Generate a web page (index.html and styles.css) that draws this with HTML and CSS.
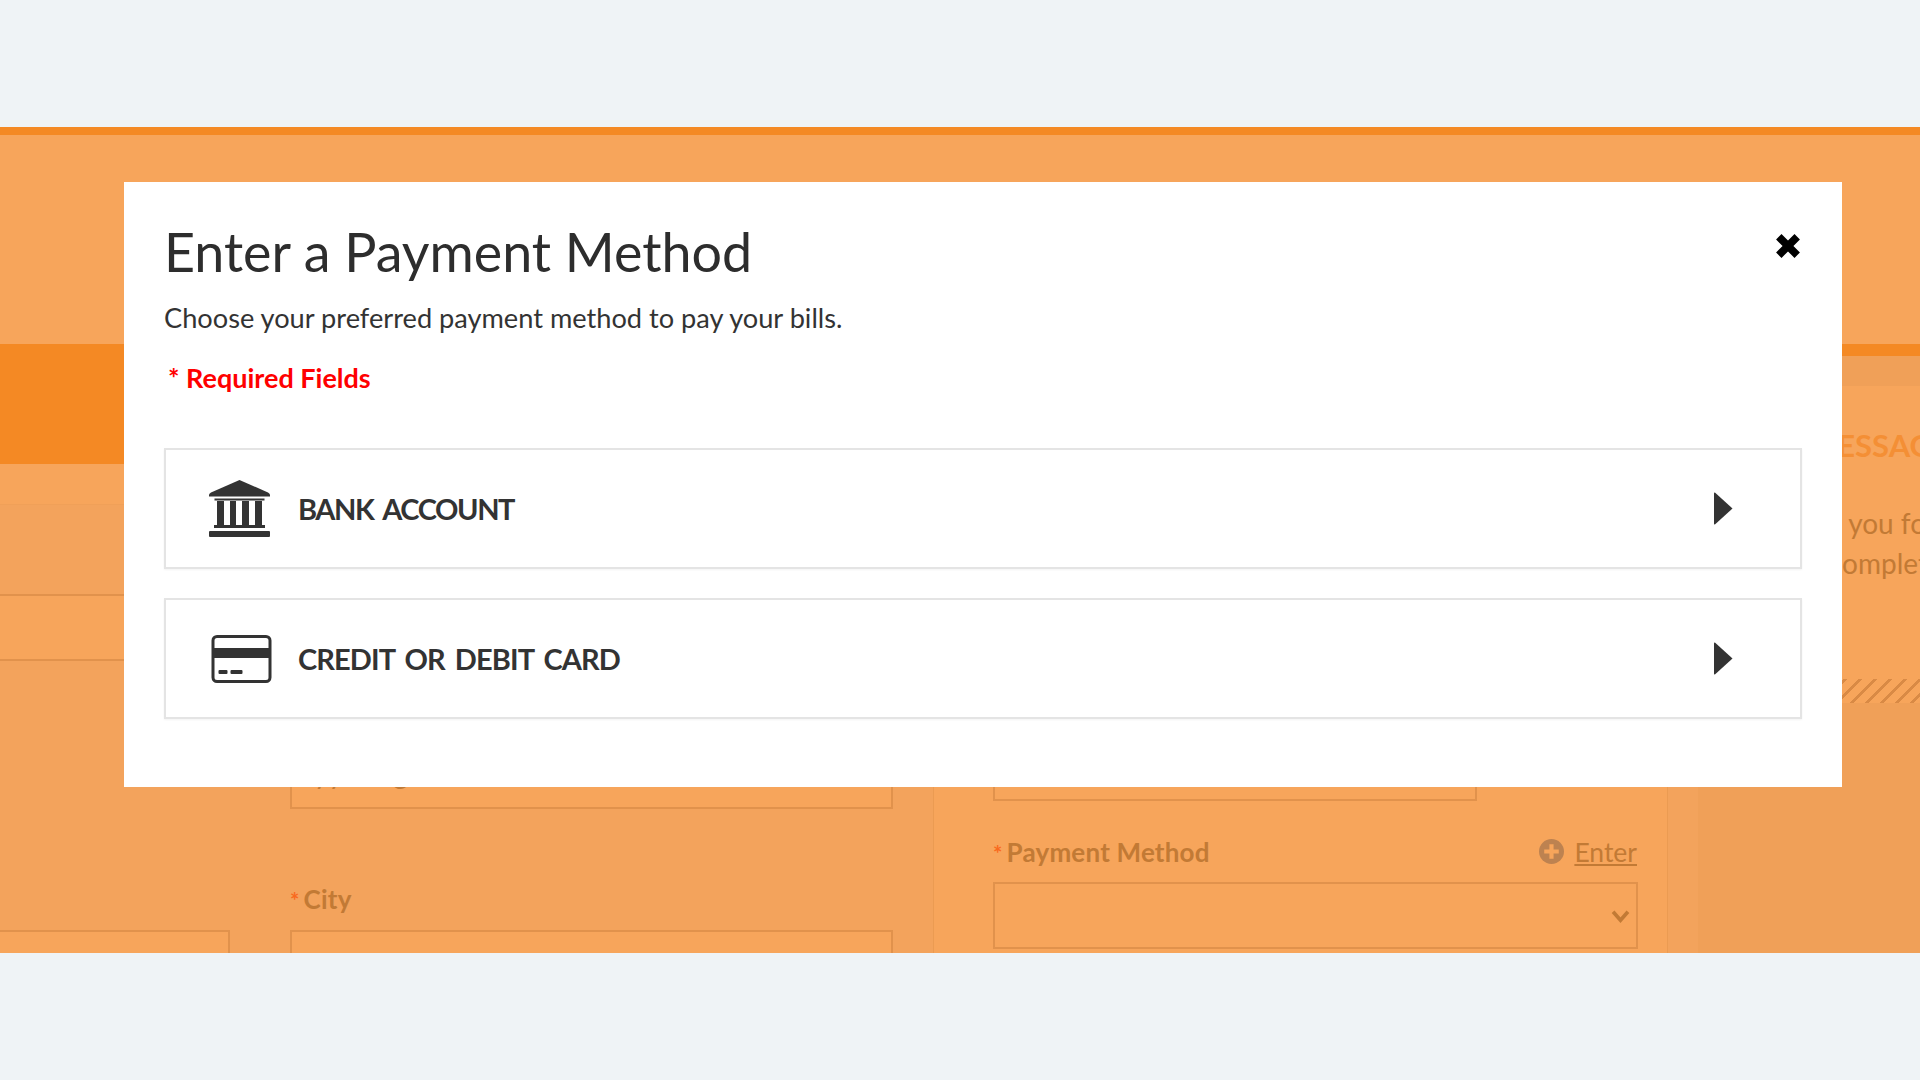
FILE: index.html
```html
<!DOCTYPE html>
<html lang="en">
<head>
  <meta charset="UTF-8" />
  <title>Enter a Payment Method</title>
  <link rel="stylesheet" href="styles.css">
</head>
<body>
  <div id="stage">
    <div class="page">
      <main class="main">
        <div class="band"></div>
        <div class="form">
          <div class="col-a">
            <div class="input input-a"></div>
            <div class="input input-a2"></div>
          </div>
          <div class="col-b">
            <div class="input input-b"><span class="input-text">yy g</span></div>
            <label class="field-label label-city"><span class="req">*</span>City</label>
            <div class="input input-b2"></div>
          </div>
          <div class="panel">
            <div class="input input-c"></div>
            <div class="label-row">
              <label class="field-label"><span class="req">*</span>Payment Method</label>
              <a class="enter-link">
                <svg class="plus-icon" viewBox="0 0 24 24"><circle cx="12" cy="12" r="12" /><path d="M10 5h4v5h5v4h-5v5h-4v-5H5v-4h5z" fill="#f7a55b" /></svg>
                <span>Enter</span>
              </a>
            </div>
            <div class="input select">
              <svg class="chevron" viewBox="0 0 20 14"><path d="M2 2l8 9 8-9" /></svg>
            </div>
          </div>
        </div>
      </main>
      <aside class="aside">
        <div class="aside-rule"></div>
        <div class="aside-head"></div>
        <h3 class="aside-title">MESSAGES</h3>
        <p class="aside-text aside-text-1">Thank you for</p>
        <p class="aside-text aside-text-2">complete your</p>
        <div class="hatch"></div>
      </aside>
    </div>

    <!-- Payment method modal -->
    <div class="modal">
      <button class="modal-close">
        <svg viewBox="0 0 24 24"><path d="M1 6l5-5 6 6 6-6 5 5-6 6 6 6-5 5-6-6-6 6-5-5 6-6z" /></svg>
      </button>
      <h1 class="modal-title">Enter a Payment Method</h1>
      <p class="modal-sub">Choose your preferred payment method to pay your bills.</p>
      <p class="modal-req">* Required Fields</p>
      <div class="method-list">
        <div class="method">
          <svg class="method-icon" viewBox="0 0 61 57">
            <path d="M30.500 0L59 12.500Q61 13.500 61 15V16.500H0V15Q0 13.500 2 12.500z" />
            <rect x="5.500" y="18.500" width="50" height="2" />
            <rect x="8" y="21" width="7" height="24" />
            <rect x="21" y="21" width="6" height="24" />
            <rect x="33" y="21" width="7" height="24" />
            <rect x="46" y="21" width="7" height="24" />
            <rect x="5" y="45" width="51" height="3" />
            <rect x="0" y="51" width="61" height="6" rx="1" />
          </svg>
          <span class="method-name method-name-bank">BANK ACCOUNT</span>
          <svg class="method-arrow" viewBox="0 0 19 33"><path d="M0 1.500Q0 0 1.200 .8L18.500 16.500 1.200 32.200Q0 33 0 31.500z" /></svg>
        </div>
        <div class="method">
          <svg class="method-icon card-icon" viewBox="0 0 60 48">
            <rect x="1.500" y="1.500" width="57" height="45" rx="4" fill="none" stroke="#333" stroke-width="3" />
            <rect x="2" y="13" width="56" height="10" />
            <rect x="7" y="35" width="9" height="4" rx="1" />
            <rect x="19" y="35" width="12" height="4" rx="1" />
          </svg>
          <span class="method-name">CREDIT OR DEBIT CARD</span>
          <svg class="method-arrow" viewBox="0 0 19 33"><path d="M0 1.500Q0 0 1.200 .8L18.500 16.500 1.200 32.200Q0 33 0 31.500z" /></svg>
        </div>
      </div>
    </div>
  </div>
</body>
</html>
```

FILE: styles.css
```css
:root {
  --page-bg: #eff3f6;
  --orange: #f48924;
  --light: #f7a55b;
  --shade: #f3a35c;
  --shade-dark: #f0a058;
  --line: #e1924c;
  --muted: #c27a35;
  --text: #333333;
}

*, *::before, *::after {
  box-sizing: border-box;
  margin: 0;
  padding: 0;
}

html, body {
  height: 100%;
  overflow: hidden;
}

body {
  font-family: Lato, 'Open Sans', sans-serif;
  background: var(--page-bg);
  color: var(--text);
}

#stage {
  position: relative;
  height: 1080px;
  padding-top: 127px;
}

.page {
  display: flex;
  height: 826px;
  overflow: hidden;
  background: var(--light);
  border-top: 8px solid var(--orange);
}

/* Form behind the modal */
.main {
  flex: 0 0 1698px;
  padding-top: 209px;
}

.band {
  height: 120px;
  background: var(--orange);
  margin-bottom: 40px;
}

.form {
  display: flex;
  height: 449px;
  background: var(--shade);
  border-top: 1px solid #f0a058;
}

.col-a {
  flex: 0 0 230px;
  padding-top: 89px;
}

.col-b {
  flex: 0 0 603px;
  margin-left: 60px;
  padding-top: 237px;
}

.panel {
  flex: 0 0 735px;
  margin-left: 40px;
  padding: 229px 29px 0 59px;
  background: var(--light);
  border-left: 1px solid #eb9b52;
  border-right: 1px solid #eb9b52;
}

.input {
  height: 67px;
  background: var(--light);
  border: 2px solid var(--line);
  position: relative;
  overflow: hidden;
}

.input-a {
  border-left: 0;
  border-right: 0;
}

.input-a2 {
  margin-top: 269px;
  border-left: 0;
}

.input-text {
  position: absolute;
  left: 22px;
  top: 12px;
  font-size: 28px;
  word-spacing: 44px;
  color: var(--muted);
}

.input-c {
  width: 484px;
}

.field-label {
  display: block;
  font-size: 26px;
  font-weight: 700;
  letter-spacing: 0.2px;
  color: var(--muted);
}

.label-city {
  margin-top: 74px;
  height: 47px;
}

.req {
  color: #f96a1e;
  margin-right: 4px;
  font-size: 22px;
}

.label-row {
  display: flex;
  align-items: center;
  justify-content: space-between;
  height: 81px;
  padding-top: 20px;
}

.enter-link {
  display: flex;
  align-items: center;
  gap: 10px;
  margin-right: 1px;
  font-size: 26.500px;
  color: var(--muted);
}

.enter-link span {
  text-decoration: underline;
}

.plus-icon {
  width: 25px;
  height: 25px;
  fill: #bd8250;
}

.select {
  height: 67px;
  display: flex;
  align-items: center;
  justify-content: flex-end;
  padding-right: 6px;
}

.chevron {
  width: 19px;
  height: 13px;
  margin-top: 2px;
  fill: none;
  stroke: var(--muted);
  stroke-width: 4;
}

/* Right side column */
.aside {
  flex: 1;
  min-width: 0;
  padding-top: 209px;
  overflow: hidden;
  background: var(--light);
  white-space: nowrap;
}

.aside-rule {
  height: 12px;
  background: var(--orange);
}

.aside-head {
  height: 30px;
  background: var(--shade-dark);
}

.aside-title {
  margin: 37px 0 0 110px;
  font-size: 31px;
  line-height: 44px;
  font-weight: 700;
  color: #f48f35;
}

.aside-text {
  font-size: 28px;
  line-height: 40px;
  color: var(--muted);
}

.aside-text-1 {
  margin: 36px 0 0 68px;
}

.aside-text-2 {
  margin-left: 131px;
}

.hatch {
  margin-top: 96px;
  height: 24px;
  background: repeating-linear-gradient(135deg, transparent 0 7.600px, #d98a45 7.600px 10.600px);
}

.aside::after {
  content: "";
  display: block;
  height: 300px;
  background: var(--shade-dark);
}

/* Modal */
.modal {
  position: absolute;
  left: 124px;
  top: 182px;
  width: 1718px;
  height: 605px;
  padding: 38px 40px 0;
  background: #fff;
}

.modal-close {
  position: absolute;
  top: 51px;
  right: 41px;
  width: 26px;
  height: 26px;
  background: none;
  border: none;
}

.modal-close svg {
  display: block;
  width: 26px;
  height: 26px;
  fill: #000;
}

.modal-title {
  font-size: 53.800px;
  line-height: 62px;
  font-weight: 400;
  color: #2d2d2d;
}

.modal-sub {
  margin-top: 18px;
  font-size: 27.200px;
  line-height: 36px;
}

.modal-req {
  margin-top: 24px;
  padding-left: 4px;
  font-size: 27px;
  line-height: 36px;
  font-weight: 700;
  color: #ff0000;
}

.method-list {
  display: flex;
  flex-direction: column;
  gap: 29px;
  margin-top: 52px;
}

.method {
  display: flex;
  align-items: center;
  width: 1638px;
  height: 121px;
  padding: 0 67px 0 43px;
  border: 2px solid #e4e4e4;
  box-shadow: 0 1px 2px rgba(0, 0, 0, 0.05);
}

.method-icon {
  flex: 0 0 61px;
  width: 61px;
  height: 57px;
  fill: var(--text);
}

.card-icon {
  height: 48px;
  margin-left: 2px;
  margin-right: -2px;
}

.method-name {
  flex: 1;
  margin-left: 28px;
  font-size: 29px;
  font-weight: 700;
  letter-spacing: -0.9px;
  word-spacing: 4px;
  color: var(--text);
}

.method-name-bank {
  letter-spacing: -1.400px;
}

.method-arrow {
  width: 19px;
  height: 33px;
  fill: var(--text);
}
```
